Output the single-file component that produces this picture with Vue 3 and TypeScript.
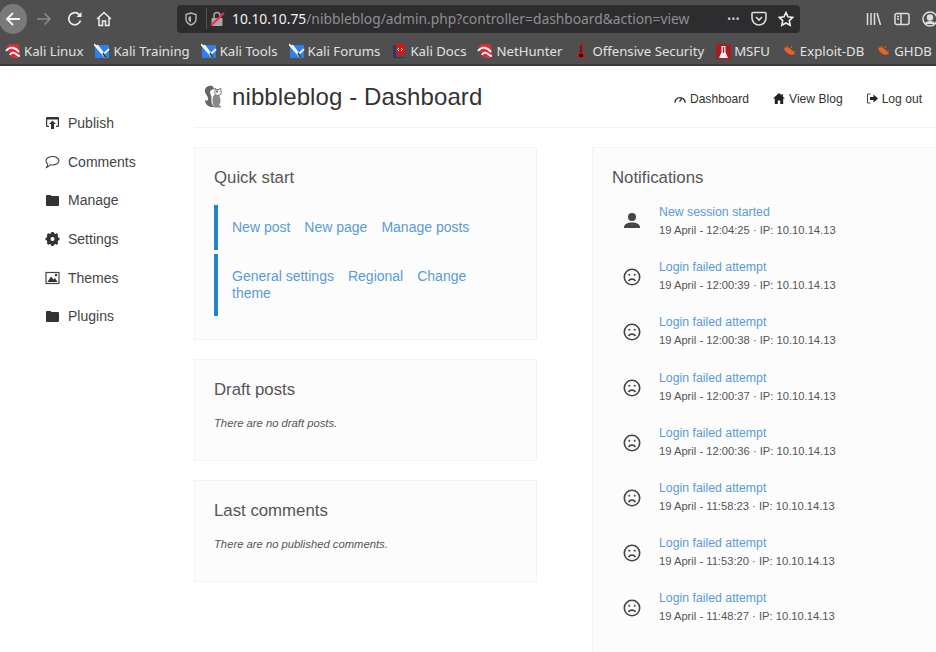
<script setup lang="ts">
interface Mark { name: string; label: string }
const bookmarks: Mark[] = [
  { name: 'kali', label: 'Kali Linux' },
  { name: 'blue', label: 'Kali Training' },
  { name: 'blue', label: 'Kali Tools' },
  { name: 'blue', label: 'Kali Forums' },
  { name: 'docs', label: 'Kali Docs' },
  { name: 'kali', label: 'NetHunter' },
  { name: 'off', label: 'Offensive Security' },
  { name: 'msfu', label: 'MSFU' },
  { name: 'bug', label: 'Exploit-DB' },
  { name: 'bug', label: 'GHDB' },
]
const sideItems = [
  { name: 'publish', label: 'Publish' },
  { name: 'comment', label: 'Comments' },
  { name: 'folder', label: 'Manage' },
  { name: 'gear', label: 'Settings' },
  { name: 'image', label: 'Themes' },
  { name: 'folder', label: 'Plugins' },
]
const notes = [
  { title: 'New session started', time: '12:04:25', user: true },
  { title: 'Login failed attempt', time: '12:00:39', user: false },
  { title: 'Login failed attempt', time: '12:00:38', user: false },
  { title: 'Login failed attempt', time: '12:00:37', user: false },
  { title: 'Login failed attempt', time: '12:00:36', user: false },
  { title: 'Login failed attempt', time: '11:58:23', user: false },
  { title: 'Login failed attempt', time: '11:53:20', user: false },
  { title: 'Login failed attempt', time: '11:48:27', user: false },
]
</script>

<template>
  <div class="page">
    <div class="toolbar">
      <div class="nav">
        <span class="back">
          <svg width="18" height="18" viewBox="0 0 18 18" fill="none" stroke="#f4f4f4" stroke-width="1.8"><path d="M16 9H3M9 3 3 9l6 6" /></svg>
        </span>
        <svg class="tool fwd" width="16" height="16" viewBox="0 0 16 16" fill="none" stroke="#8b8b8b" stroke-width="1.6"><path d="M1 8h13M8.500 2.500 14 8l-5.500 5.500" /></svg>
        <svg class="tool reload" width="16" height="16" viewBox="0 0 16 16" fill="none" stroke="#eee" stroke-width="1.7"><path d="M13.500 9.500A6 6 0 1 1 11.500 3L14 5.500" /><path d="M14.500 1v5h-5" fill="#eee" stroke="none" /></svg>
        <svg class="tool home" width="16" height="16" viewBox="0 0 16 16" fill="none" stroke="#eee" stroke-width="1.5"><path d="M1 8 8 1.500 15 8M3 6.500V14.500h3.500V10h3v4.500H13V6.500" /></svg>
      </div>
      <div class="urlbar">
        <svg class="shield" width="14" height="14" viewBox="0 0 14 14" fill="none" stroke="#b5b5b5" stroke-width="1.400"><path d="M7 1 2 2.500V7c0 3 2.500 5 5 6 2.500-1 5-3 5-6V2.500Z" /><path d="M7 4 4.500 5v2.500C4.500 9 6 10 7 10.500Z" fill="#b5b5b5" stroke="none" /></svg>
        <span class="sep"></span>
        <svg class="lock" width="15" height="16" viewBox="0 0 15 16"><rect x="1.500" y="7" width="11" height="8" rx="1" fill="#a8a8a8" /><path d="M4 7V4.500a3 3 0 0 1 6 0V7" fill="none" stroke="#a8a8a8" stroke-width="1.500" /><path d="M1 14.500 14 2" stroke="#ef2b4e" stroke-width="2" /></svg>
        <span class="url"><span class="host">10.10.10.75</span>/nibbleblog/admin.php?controller=dashboard&amp;action=view</span>
        <span class="dots">•••</span>
        <svg class="pocket" width="16" height="15" viewBox="0 0 16 15" fill="none" stroke="#ddd" stroke-width="1.600"><path d="M2 1.500h12a1 1 0 0 1 1 1V7a7 7 0 0 1-14 0V2.500a1 1 0 0 1 1-1Z" /><path d="m5 6 3 3 3-3" /></svg>
        <svg class="star" width="16" height="16" viewBox="0 0 16 16" fill="none" stroke="#eee" stroke-width="1.600"><path d="m8 1.500 2 4.300 4.700.6-3.400 3.200.9 4.700L8 12l-4.200 2.300.9-4.700L1.300 6.400 6 5.800Z" /></svg>
      </div>
      <svg class="lib" width="16" height="14" viewBox="0 0 16 14" fill="none" stroke="#ddd" stroke-width="1.500"><path d="M1.500 1v12M5 1v12M8.500 1v12M11 1l3.500 12" /></svg>
      <svg class="side" width="16" height="14" viewBox="0 0 16 14" fill="none" stroke="#ddd" stroke-width="1.500"><rect x="1" y="1.500" width="14" height="11" rx="2" /><path d="M7 1.500v11M3 4.500h2M3 7h2" /></svg>
      <svg class="acct" width="16" height="16" viewBox="0 0 16 16" fill="none" stroke="#ddd" stroke-width="1.500"><circle cx="8" cy="8" r="7" /><circle cx="8" cy="6.500" r="2.500" fill="#ddd" /><path d="M3.500 13c1-3 8-3 9 0" fill="#ddd" /></svg>
    </div>

    <div class="bookmarks">
      <span v-for="b in bookmarks" :key="b.label" class="mark">
        <svg width="16" height="16" viewBox="0 0 16 16">
          <template v-if="b.name === 'kali'">
            <path d="M1 5 4 1h9l2 4v8l-2 2H7Z" fill="#d2323c" />
            <path d="M1 8C5 3 10 4 14 9M5 12c1-3 4-3 6-1 1 1 3 2 4 2" fill="none" stroke="#f5f5f5" stroke-width="1.800" />
          </template>
          <template v-else-if="b.name === 'blue'">
            <rect x="1" y="2" width="14" height="13" rx="1" fill="#2f80ed" />
            <path d="M0 1l12 14M3 2l7 9M15 6l-5 5" fill="none" stroke="#f2f2f2" stroke-width="1.800" />
            <path d="M9 10l3 5" stroke="#333" stroke-width="1.500" />
          </template>
          <template v-else-if="b.name === 'docs'">
            <path d="M3 1h11v11H3Z" fill="#c91c1c" />
            <path d="M2 2h3v12h9v1H4a2 2 0 0 1-2-2Z" fill="#34346a" />
            <path d="m8 5-1.500 1.500L8 8m2-3 1.500 1.500L10 8" fill="none" stroke="#fff" stroke-width="1" />
          </template>
          <template v-else-if="b.name === 'off'">
            <path d="M6.500 1h3v8l3.500 6H3l3.500-6Z" fill="#c01818" />
            <path d="M7.500 2h1v8h-1ZM6 11h4v3H6Z" fill="#2b1616" />
          </template>
          <template v-else-if="b.name === 'msfu'">
            <rect x="1" y="1" width="15" height="15" fill="#a61c22" />
            <path d="M6.500 3h4v6l2.500 6H4l2.500-6Z" fill="#f4eeee" />
            <path d="M7.800 4h1.400v6h-1.400Z" fill="#a61c22" />
          </template>
          <template v-else>
            <path d="M3 5c3-2 7 0 11 6-4 2-9 0-11-6Z" fill="#e8641f" />
            <path d="M6 3l2 3M10 5l1-2M12 9l2-1" stroke="#e8641f" stroke-width="1" />
          </template>
        </svg>
        <span>{{ b.label }}</span>
      </span>
    </div>

    <div class="body">
      <aside class="sidebar">
        <a v-for="s in sideItems" :key="s.label" class="side-link">
          <svg width="15" height="14" viewBox="0 0 15 14">
            <template v-if="s.name === 'publish'">
              <path d="M1 10V2a1 1 0 0 1 1-1h11a1 1 0 0 1 1 1v8a1 1 0 0 1-1 1h-2V9.800h1.800V3.500H2.200v6.300H4V11H2a1 1 0 0 1-1-1Z" fill="#333" />
              <path d="M7.500 4.500 11 8H9v5H6V8H4Z" fill="#333" />
            </template>
            <template v-else-if="s.name === 'comment'">
              <path d="M7.500 1.500c3.500 0 6.500 1.900 6.500 4.300S11 10 7.500 10c-.8 0-1.500 0-2.200-.2C4.500 11 3 12 1.500 12.500 2.500 11 2.800 10.200 2.800 9.200 1.600 8.400 1 7.200 1 5.800 1 3.400 4 1.500 7.500 1.500Z" fill="none" stroke="#444" stroke-width="1.100" />
            </template>
            <template v-else-if="s.name === 'folder'">
              <path d="M1 3a1 1 0 0 1 1-1h3.500l1 1H13a1 1 0 0 1 1 1v8a1 1 0 0 1-1 1H2a1 1 0 0 1-1-1Z" fill="#333" />
            </template>
            <template v-else-if="s.name === 'gear'">
              <circle cx="7.500" cy="7" r="4.500" fill="none" stroke="#333" stroke-width="3" />
              <path d="M7.500 0v14M.5 7h14M2.500 2l10 10M12.500 2l-10 10" stroke="#333" stroke-width="2.500" />
              <circle cx="7.500" cy="7" r="2" fill="#fff" />
            </template>
            <template v-else>
              <rect x="1" y="1.500" width="13" height="11" fill="none" stroke="#444" stroke-width="1.200" />
              <path d="M2.500 11 6 5.500l2.500 3L10 7l2.500 4Z" fill="#333" />
              <circle cx="11" cy="4" r="1.200" fill="#333" />
            </template>
          </svg>
          <span>{{ s.label }}</span>
        </a>
      </aside>

      <main class="main">
        <header class="head">
          <svg class="logo" width="20" height="23" viewBox="0 0 20 23">
            <path d="M9 1C5 0 1 3 2 7c1 3 3 4 3 7 0 2-2 2-3 1 0 4 3 7 7 7h2c-2-2-3-5-2.500-8C9 11 7 9 7 7c0-2 2-2 4-3 0-1.500-1-2.500-2-3Z" fill="#666" />
            <path d="M10 12c1-3 4-3 6-1 2 2 2 7 0 9l2 1.500c.5.5 0 1-.5 1h-6C9.500 20 9 15 10 12Z" fill="#888" />
            <path d="M12 3l1 1.500h3L17.500 3l.5 3c1 2 0 4.500-3 4.500S11 8 12 6Z" fill="#eee" stroke="#777" stroke-width="1" />
            <circle cx="14" cy="6.500" r=".9" fill="#444" />
          </svg>
          <h1 class="title">nibbleblog - Dashboard</h1>
          <nav class="topnav">
            <a class="top-link dash">
              <svg width="12" height="9" viewBox="0 0 13 9" fill="none" stroke="#333" stroke-width="1.500"><path d="M1 9a5.500 5.500 0 0 1 11 0M6 8l2.500-4" /></svg>
              Dashboard
            </a>
            <a class="top-link">
              <svg width="12" height="11" viewBox="0 0 12 11" fill="#222"><path d="M6 0 0 5.500h1.800V11h3V7.500h2.400V11h3V5.500H12L9.800 3.500V1H8.500v1.300Z" /></svg>
              View Blog
            </a>
            <a class="top-link">
              <svg width="12" height="11" viewBox="0 0 12 11"><path d="M4.500 1H1.500v9h3" fill="none" stroke="#444" stroke-width="1" /><path d="M4 4h3.500V1.500L12 5.500l-4.500 4V7H4Z" fill="#222" /></svg>
              Log out
            </a>
          </nav>
        </header>

        <div class="columns">
          <div class="left">
            <section class="card quick">
              <h2>Quick start</h2>
              <div class="quote first">
                <a>New post</a><a>New page</a><a>Manage posts</a>
              </div>
              <div class="quote">
                <a>General settings</a><a>Regional</a><a>Change</a><a>theme</a>
              </div>
            </section>
            <section class="card small">
              <h2>Draft posts</h2>
              <p>There are no draft posts.</p>
            </section>
            <section class="card small">
              <h2>Last comments</h2>
              <p>There are no published comments.</p>
            </section>
          </div>
          <section class="card notes">
            <h2>Notifications</h2>
            <div v-for="n in notes" :key="n.time" class="note">
              <svg v-if="n.user" width="18" height="18" viewBox="0 0 18 18" fill="#444"><circle cx="9" cy="4" r="4" /><path d="M1 14.500c0-3 3-5 8-5s8 2 8 5v.5H1Z" /></svg>
              <svg v-else width="18" height="18" viewBox="0 0 18 18" fill="none" stroke="#444" stroke-width="1.600"><circle cx="9" cy="9" r="7.700" /><path d="M5.500 13c1.500-2.500 5.500-2.500 7 0" /><circle cx="6.300" cy="6.800" r="1" fill="#444" stroke="none" /><circle cx="11.700" cy="6.800" r="1" fill="#444" stroke="none" /></svg>
              <div class="note-text">
                <a>{{ n.title }}</a>
                <span>19 April - {{ n.time }} · IP: 10.10.14.13</span>
              </div>
            </div>
          </section>
        </div>
      </main>
    </div>
  </div>
</template>

<style scoped>
.page {
  width: 936px;
  height: 652px;
  overflow: hidden;
  background: #fff;
  font-family: "Liberation Sans", Arial, sans-serif;
  color: #444;
}
.toolbar {
  height: 37px;
  background: #4f4f4f;
  display: flex;
  align-items: center;
}
.nav { display: flex; align-items: center; width: 177px; flex: none; }
.back {
  width: 28px; height: 30px; margin-left: -1px; flex: none;
  background: #7a7a7a; border-radius: 50%;
  display: flex; align-items: center; justify-content: center;
}
.tool { flex: none; }
.fwd { margin-left: 9px; }
.reload { margin-left: 15px; }
.home { margin-left: 13px; }
.urlbar {
  width: 623px; height: 28px; flex: none;
  background: #2d2d2f; border-radius: 4px;
  display: flex; align-items: center;
  font-family: "Noto Sans", sans-serif;
  font-size: 13.800px;
  color: #8f8f92;
}
.shield { margin-left: 7px; flex: none; }
.sep { width: 1px; height: 21px; background: #555; margin-left: 8px; flex: none; }
.lock { margin-left: 3px; flex: none; }
.url { margin-left: 7px; white-space: nowrap; flex: 1; }
.host { color: #f2f2f2; }
.dots { color: #ccc; font-size: 10px; letter-spacing: .5px; margin-right: 11px; }
.pocket { margin-right: 11px; flex: none; }
.star { margin-right: 6px; flex: none; }
.lib { margin-left: 66px; flex: none; }
.side { margin-left: 12px; flex: none; }
.acct { margin-left: 12px; flex: none; }
.bookmarks {
  height: 29px;
  box-sizing: border-box;
  background: #4f4f4f;
  border-bottom: 2px solid #3a3a3a;
  display: flex;
  align-items: center;
  padding: 1px 0 0 5px;
  gap: 11px;
  white-space: nowrap;
  font-family: "Noto Sans", sans-serif;
  font-size: 13.200px;
  color: #e2e2e2;
}
.mark { display: flex; align-items: center; gap: 3px; flex: none; }
.body { display: flex; height: 586px; }
.sidebar {
  width: 194px; flex: none;
  box-sizing: border-box;
  padding: 48px 0 0 45px;
  display: flex; flex-direction: column;
  gap: 20.700px;
}
.side-link {
  display: flex; align-items: center; gap: 8px;
  height: 18px;
  font-size: 14px;
  color: #444;
}
.main { flex: 1; min-width: 0; overflow: hidden; }
.head {
  height: 62px;
  box-sizing: border-box;
  border-bottom: 1px solid #f2f2f2;
  display: flex; align-items: center;
  padding: 0 14px 0 9px;
}
.logo { flex: none; margin-right: 9px; }
.title {
  margin: 0;
  font-size: 24px;
  font-weight: 400;
  color: #333;
  letter-spacing: .1px;
}
.topnav { margin-left: auto; margin-top: 4px; display: flex; gap: 23px; }
.top-link { font-size: 12.100px; color: #333; display: flex; align-items: center; gap: 4px; }
.dash { margin-right: 1px; }
.columns {
  display: flex;
  gap: 55px;
  margin-top: 19px;
  width: 760px;
}
.left { width: 343px; flex: none; display: flex; flex-direction: column; gap: 19px; }
.card {
  box-sizing: border-box;
  background: #fcfcfc;
  border: 1px solid #f3f3f3;
  padding: 20px 19px 19px;
}
.card h2 {
  margin: 0;
  font-size: 16.800px;
  line-height: 20px;
  font-weight: 400;
  color: #555;
}
.quick { height: 193px; }
.quote {
  margin-top: 4px;
  border-left: 4px solid #2185c5;
  padding: 14px;
  font-size: 14px;
  line-height: 17px;
  color: #5a9bd8;
  display: flex;
  flex-wrap: wrap;
  column-gap: 14px;
}
.quote.first { margin-top: 17px; height: 17px; }
.small { height: 102px; }
.small p {
  margin: 17px 0 0;
  font-size: 11.250px;
  font-style: italic;
  color: #555;
}
.notes { width: 362px; flex: none; height: 560px; }
.note { display: flex; align-items: center; height: 55.200px; margin-left: 11px; }
.note svg { margin-top: 1px; flex: none; }
.notes h2 { margin-bottom: 6px; }
.note-text {
  margin-left: 18px;
  display: flex; flex-direction: column;
  gap: 3px;
  font-size: 11.200px;
  line-height: 15px;
}
.note-text a { color: #5a9bd8; font-size: 12.300px; }
.note-text span { color: #555; }
</style>
